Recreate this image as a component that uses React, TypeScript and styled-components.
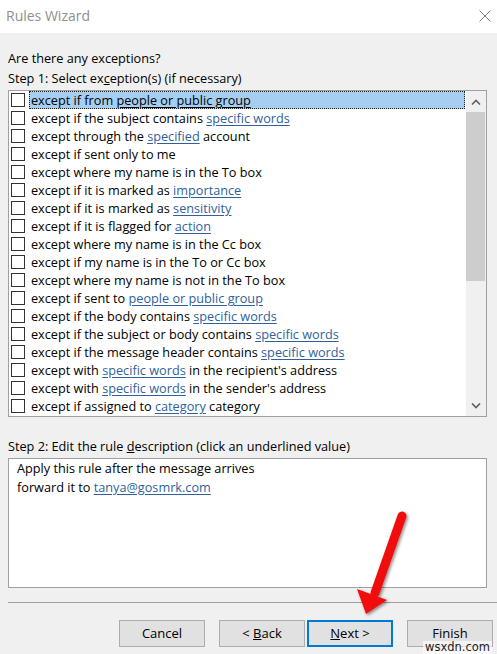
import React from 'react';
import styled, { createGlobalStyle } from 'styled-components';

const GlobalStyle = createGlobalStyle`
  html, body {
    margin: 0;
    padding: 0;
    background: #f0f0f0;
  }
  * {
    box-sizing: border-box;
  }
`;

type Part = string | { link: string };

interface Exception {
  parts: Part[];
}

const exceptions: Exception[] = [
  { parts: ['except if from ', { link: 'people or public group' }] },
  { parts: ['except if the subject contains ', { link: 'specific words' }] },
  { parts: ['except through the ', { link: 'specified' }, ' account'] },
  { parts: ['except if sent only to me'] },
  { parts: ['except where my name is in the To box'] },
  { parts: ['except if it is marked as ', { link: 'importance' }] },
  { parts: ['except if it is marked as ', { link: 'sensitivity' }] },
  { parts: ['except if it is flagged for ', { link: 'action' }] },
  { parts: ['except where my name is in the Cc box'] },
  { parts: ['except if my name is in the To or Cc box'] },
  { parts: ['except where my name is not in the To box'] },
  { parts: ['except if sent to ', { link: 'people or public group' }] },
  { parts: ['except if the body contains ', { link: 'specific words' }] },
  { parts: ['except if the subject or body contains ', { link: 'specific words' }] },
  { parts: ['except if the message header contains ', { link: 'specific words' }] },
  { parts: ['except with ', { link: 'specific words' }, " in the recipient's address"] },
  { parts: ['except with ', { link: 'specific words' }, " in the sender's address"] },
  { parts: ['except if assigned to ', { link: 'category' }, ' category'] },
];

const Window = styled.div`
  position: relative;
  width: 497px;
  height: 654px;
  overflow: hidden;
  background: #f0f0f0;
  font-family: 'Open Sans', 'Noto Sans', sans-serif;
  font-size: 12.7px;
  color: #000;
`;

const TitleBar = styled.div`
  height: 33px;
  background: #fff;
  display: flex;
  align-items: center;
  justify-content: space-between;
  padding: 0 6px 2px 6px;
`;

const Title = styled.div`
  font-size: 14px;
  color: #8f8f8f;
`;

const CloseIcon = styled.svg`
  width: 12px;
  height: 12px;
`;

const Body = styled.div`
  padding: 15px 10px 0 8px;
`;

const Label = styled.div`
  height: 20px;
  line-height: 20px;
  white-space: nowrap;
`;

const ListBox = styled.div`
  margin-top: 2px;
  width: 479px;
  height: 327px;
  border: 1px solid #a0a0a0;
  background: #fff;
  display: flex;
`;

const Rows = styled.div`
  flex: 1;
  display: flex;
  flex-direction: column;
`;

const Row = styled.div`
  height: 18px;
  display: flex;
  align-items: center;
  padding-left: 2px;
`;

const Check = styled.span`
  width: 14px;
  height: 14px;
  border: 1px solid #333;
  background: #fff;
  flex: none;
`;

const RowText = styled.span<{ $selected?: boolean }>`
  flex: 1;
  height: 18px;
  line-height: 18px;
  margin-left: 4px;
  margin-right: 1px;
  padding-left: 2px;
  white-space: nowrap;
  background: ${p => (p.$selected ? '#a5cef0' : 'transparent')};
  outline: ${p => (p.$selected ? '1px dotted #222' : 'none')};
  outline-offset: -1px;
`;

const Link = styled.span<{ $selected?: boolean }>`
  color: ${p => (p.$selected ? '#000' : '#2f5f9c')};
  text-decoration: underline;
  text-underline-offset: 2px;
`;

const ScrollBar = styled.div`
  width: 20px;
  display: flex;
  flex-direction: column;
  background: #f0f0f0;
  border-right: 1px solid #f0f0f0;
`;

const ScrollArrow = styled.div`
  height: 21px;
  display: flex;
  align-items: center;
  justify-content: center;
`;

const Thumb = styled.div`
  height: 169px;
  background: #cdcdcd;
`;

const Track = styled.div`
  flex: 1;
`;

const Step2Label = styled(Label)`
  margin-top: 19px;
`;

const Description = styled.div`
  margin-top: 2px;
  width: 479px;
  height: 130px;
  border: 1px solid #a0a0a0;
  background: #fff;
  padding: 0 8px;
  line-height: 19px;
`;

const Separator = styled.div`
  margin: 14px -10px 0 0;
  height: 1px;
  background: #a0a0a0;
`;

const ButtonRow = styled.div`
  display: flex;
  justify-content: flex-end;
  margin-top: 17px;
  margin-right: -6px;
`;

const Button = styled.div<{ $primary?: boolean; $gap?: number }>`
  width: 86px;
  height: 27px;
  margin-left: ${p => p.$gap ?? 0}px;
  padding-bottom: 2px;
  background: #e1e1e1;
  border: ${p => (p.$primary ? '2px solid #0078d7' : '1px solid #adadad')};
  display: flex;
  align-items: center;
  justify-content: center;
  font-size: 13px;
`;

const Overlay = styled.svg`
  position: absolute;
  left: 0;
  top: 0;
  pointer-events: none;
`;

const Watermark = styled.div`
  position: absolute;
  left: 423px;
  top: 641px;
  padding: 0 2px;
  font-family: 'DejaVu Sans', sans-serif;
  font-size: 11.5px;
  line-height: 13px;
  color: #222;
  background: rgba(255, 255, 255, 0.6);
`;

const renderParts = (parts: Part[], selected: boolean) =>
  parts.map((part, i) =>
    typeof part === 'string' ? (
      <React.Fragment key={i}>{part}</React.Fragment>
    ) : (
      <Link key={i} $selected={selected}>
        {part.link}
      </Link>
    )
  );

export default function App() {
  return (
    <Window>
      <GlobalStyle />
      <TitleBar>
        <Title>Rules Wizard</Title>
        <CloseIcon viewBox="0 0 12 12">
          <path d="M0.5 0.5 L11.5 11.5 M11.5 0.5 L0.5 11.5" stroke="#808080" strokeWidth="1" fill="none" />
        </CloseIcon>
      </TitleBar>
      <Body>
        <Label>Are there any exceptions?</Label>
        <Label>
          Step 1: Select ex<u>c</u>eption(s) (if necessary)
        </Label>
        <ListBox>
          <Rows>
            {exceptions.map((ex, i) => (
              <Row key={i}>
                <Check />
                <RowText $selected={i === 0}>{renderParts(ex.parts, i === 0)}</RowText>
              </Row>
            ))}
          </Rows>
          <ScrollBar>
            <ScrollArrow>
              <svg width="10" height="6" viewBox="0 0 10 6">
                <path d="M1 5.5 L5 1.5 L9 5.5" stroke="#606060" strokeWidth="1.6" fill="none" />
              </svg>
            </ScrollArrow>
            <Thumb />
            <Track />
            <ScrollArrow>
              <svg width="10" height="6" viewBox="0 0 10 6">
                <path d="M1 0.5 L5 4.5 L9 0.5" stroke="#606060" strokeWidth="1.6" fill="none" />
              </svg>
            </ScrollArrow>
          </ScrollBar>
        </ListBox>
        <Step2Label>
          Step 2: Edit the rule <u>d</u>escription (click an underlined value)
        </Step2Label>
        <Description>
          <div>Apply this rule after the message arrives</div>
          <div>
            forward it to <Link>tanya@gosmrk.com</Link>
          </div>
        </Description>
        <Separator />
        <ButtonRow>
          <Button>Cancel</Button>
          <Button $gap={14}>
            &lt;&nbsp;<u>B</u>ack
          </Button>
          <Button $gap={2} $primary>
            <u>N</u>ext&nbsp;&gt;
          </Button>
          <Button $gap={14}>Finish</Button>
        </ButtonRow>
      </Body>
      <Overlay width="497" height="654" viewBox="0 0 497 654">
        <defs>
          <filter id="shadow" x="-50%" y="-50%" width="200%" height="200%">
            <feDropShadow dx="1.5" dy="1.5" stdDeviation="1.5" floodColor="#000" floodOpacity="0.45" />
          </filter>
        </defs>
        <g filter="url(#shadow)">
          <line x1="402" y1="516" x2="375" y2="593" stroke="#f01010" strokeWidth="9" strokeLinecap="round" />
          <polygon points="357,589 387,600 366,614" fill="#f01010" />
        </g>
      </Overlay>
      <Watermark>wsxdn.com</Watermark>
    </Window>
  );
}
